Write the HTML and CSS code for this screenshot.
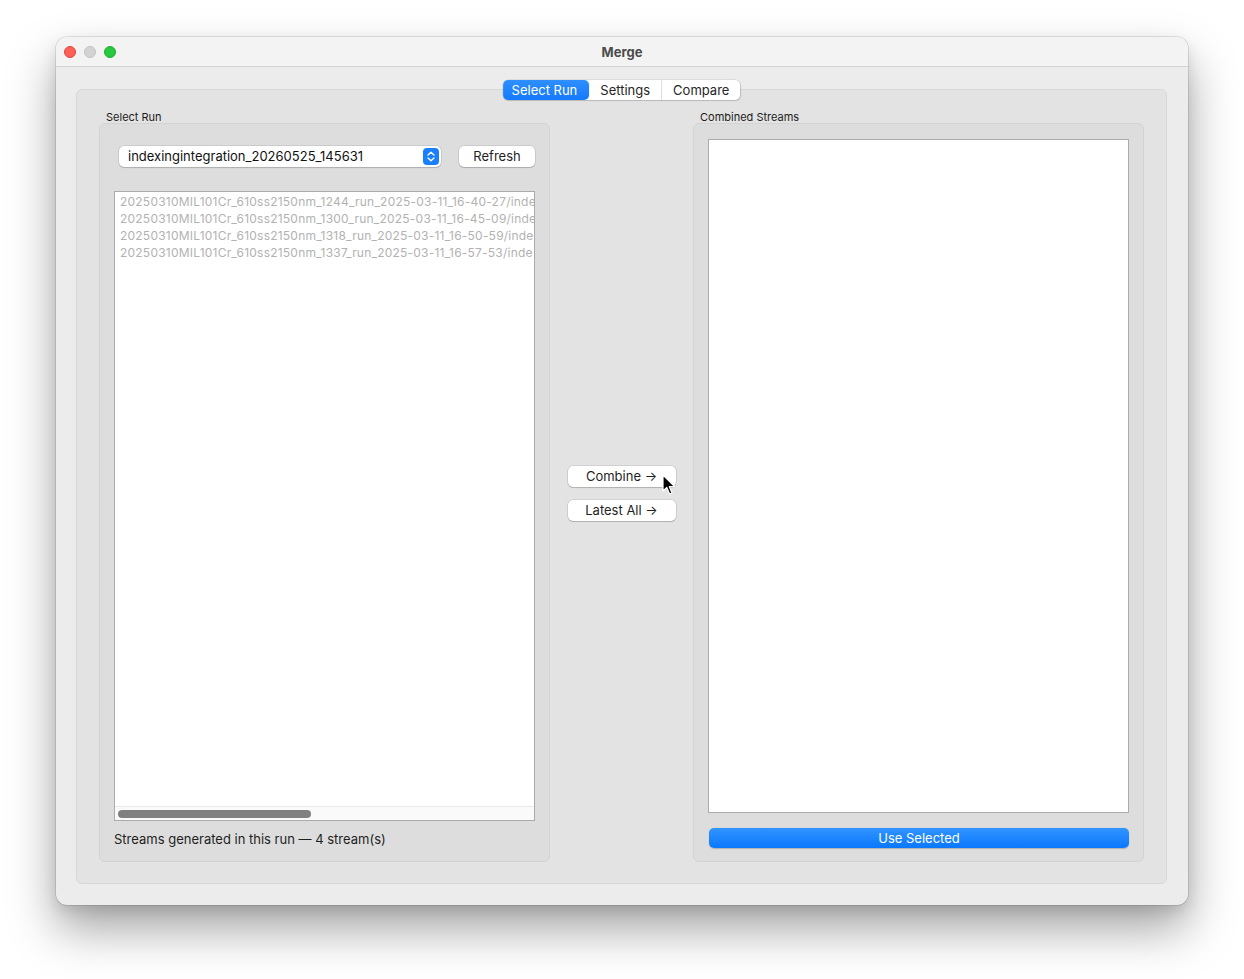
FILE: index.html
```html
<!DOCTYPE html>
<html lang="en">
<head>
  <meta charset="UTF-8" />
  <title>Merge</title>
  <link rel="stylesheet" href="styles.css">
</head>
<body>
  <div class="window">
    <div class="titlebar">
      <div class="lights">
        <span class="light red"></span>
        <span class="light gray"></span>
        <span class="light green"></span>
      </div>
      <div class="title">Merge</div>
    </div>

    <div class="content">
      <div class="tabframe">
        <div class="tabs">
          <span class="tab active">Select Run</span>
          <span class="tab">Settings</span>
          <span class="tab">Compare</span>
        </div>

        <div class="columns">
          <!-- left: run picker -->
          <div class="group">
            <div class="group-title">Select Run</div>
            <div class="group-box run-box">
              <div class="run-row">
                <div class="combo">
                  <span>indexingintegration_20260525_145631</span>
                  <svg class="combo-arrow" width="16" height="17" viewBox="0 0 16 17">
                    <rect width="16" height="17" rx="4" fill="#1a7ffb"/>
                    <path d="M5 7 L8 4.2 L11 7" fill="none" stroke="#fff" stroke-width="1.4" stroke-linecap="round" stroke-linejoin="round"/>
                    <path d="M5 10 L8 12.8 L11 10" fill="none" stroke="#fff" stroke-width="1.4" stroke-linecap="round" stroke-linejoin="round"/>
                  </svg>
                </div>
                <button class="btn refresh">Refresh</button>
              </div>

              <div class="list">
                <div class="list-items">
                  <div class="item">20250310MIL101Cr_610ss2150nm_1244_run_2025-03-11_16-40-27/inde</div>
                  <div class="item">20250310MIL101Cr_610ss2150nm_1300_run_2025-03-11_16-45-09/inde</div>
                  <div class="item">20250310MIL101Cr_610ss2150nm_1318_run_2025-03-11_16-50-59/inde</div>
                  <div class="item">20250310MIL101Cr_610ss2150nm_1337_run_2025-03-11_16-57-53/inde</div>
                </div>
                <div class="hscroll"><div class="thumb"></div></div>
              </div>

              <div class="status">Streams generated in this run — 4 stream(s)</div>
            </div>
          </div>

          <!-- middle: actions -->
          <div class="actions">
            <button class="btn action">Combine →</button>
            <button class="btn action">Latest All →</button>
          </div>

          <!-- right: combined output -->
          <div class="group">
            <div class="group-title">Combined Streams</div>
            <div class="group-box out-box">
              <div class="list out-list"></div>
              <button class="btn primary">Use Selected</button>
            </div>
          </div>
        </div>
      </div>
    </div>
  </div>

  <svg class="cursor" width="14" height="22" viewBox="0 0 14 22">
    <path d="M1 1 L1 17 L4.8 13.4 L7.6 20 L10 19 L7.3 12.6 L12.4 12.4 Z" fill="#000" stroke="#fff" stroke-width="1.2" stroke-linejoin="round"/>
  </svg>
</body>
</html>
```

FILE: styles.css
```css
body {
  margin: 0;
  padding: 37px 56px 0;
  min-height: 100vh;
  box-sizing: border-box;
  background: #ffffff;
  font-family: 'Inter', 'Liberation Sans', sans-serif;
  font-size: 13px;
  color: #1f1f1f;
}

.window {
  width: 1132px;
  height: 868px;
  border-radius: 11px;
  overflow: hidden;
  background: #ececec;
  box-shadow: 0 0 0 0.5px rgba(0, 0, 0, 0.2), 0 24px 48px rgba(0, 0, 0, 0.36), 0 6px 14px rgba(0, 0, 0, 0.1);
  display: flex;
  flex-direction: column;
}

.titlebar {
  height: 29px;
  background: #f2f3f2;
  border-bottom: 1px solid #d2d2d2;
  display: flex;
  align-items: center;
  position: relative;
}

.lights {
  display: flex;
  gap: 8px;
  padding-left: 8px;
  position: absolute;
  left: 0;
  top: 9px;
}

.light {
  width: 12px;
  height: 12px;
  border-radius: 50%;
  box-sizing: border-box;
}

.light.red { background: #fe5f57; border: 0.5px solid #e0443e; }
.light.gray { background: #d3d3d3; border: 0.5px solid #c2c2c2; }
.light.green { background: #28c840; border: 0.5px solid #1dad2b; }

.title {
  flex: 1;
  text-align: center;
  font-weight: 700;
  font-size: 13px;
  color: #4c4c4c;
}

.content {
  flex: 1;
  padding: 22px 21px 21px 20px;
  display: flex;
}

.tabframe {
  flex: 1;
  position: relative;
  background: #e3e3e3;
  border: 1px solid #d7d7d7;
  border-radius: 6px;
  padding: 21px 22px 21px 22px;
  display: flex;
}

.tabs {
  position: absolute;
  top: -10px;
  left: 50%;
  transform: translateX(-50%);
  display: flex;
  height: 20px;
  background: #ffffff;
  border-radius: 5px;
  box-shadow: 0 0 0 0.5px rgba(0, 0, 0, 0.14), 0 1px 1px rgba(0, 0, 0, 0.12);
}

.tab {
  display: flex;
  align-items: center;
  padding: 0 11px;
  font-size: 13px;
  color: #262626;
  border-left: 1px solid #dcdcdc;
}

.tab:first-child { border-left: none; }

.tab.active {
  background: linear-gradient(#2f8fff, #1479fb);
  color: #ffffff;
  border-radius: 5px;
  padding: 0 12px 0 9px;
}

.tab.active + .tab { border-left: none; }

.columns {
  flex: 1;
  display: grid;
  grid-template-columns: 451px 1fr 451px;
}

.group {
  display: flex;
  flex-direction: column;
}

.group-title {
  font-size: 11px;
  line-height: 12px;
  padding-left: 7px;
  color: #1c1c1c;
}

.group-box {
  flex: 1;
  background: #dddddd;
  border: 1px solid #d3d3d3;
  border-radius: 6px;
  display: flex;
  flex-direction: column;
}

.run-box {
  padding: 21px 14px 14px 14px;
}

.run-row {
  display: flex;
  align-items: center;
  gap: 18px;
  padding-left: 5px;
  height: 22px;
}

.combo {
  width: 322px;
  height: 21px;
  box-sizing: border-box;
  background: #ffffff;
  border-radius: 5px;
  box-shadow: 0 0 0 0.5px rgba(0, 0, 0, 0.16), 0 1px 1px rgba(0, 0, 0, 0.14);
  display: flex;
  align-items: center;
  justify-content: space-between;
  padding: 0 2px 0 9px;
  color: #111;
}

.combo-arrow { display: block; }

.btn {
  font-family: inherit;
  font-size: 13px;
  color: #1f1f1f;
  background: #ffffff;
  border: none;
  border-radius: 5px;
  box-shadow: 0 0 0 0.5px rgba(0, 0, 0, 0.16), 0 1px 1px rgba(0, 0, 0, 0.16);
  padding: 0;
  height: 21px;
}

.refresh {
  width: 76px;
}

.list {
  background: #ffffff;
  border: 1px solid #ababab;
  display: flex;
  flex-direction: column;
  overflow: hidden;
}

.run-box .list {
  flex: 1;
  margin-top: 24px;
}

.list-items {
  flex: 1;
  padding: 1px 0 0 5px;
  white-space: nowrap;
  overflow: hidden;
}

.item {
  font-size: 12px;
  line-height: 17px;
  color: #b2b2b2;
  letter-spacing: 0.22px;
}

.hscroll {
  height: 14px;
  background: #fafafa;
  border-top: 1px solid #e8e8e8;
  padding: 3px 0 0 3px;
  box-sizing: border-box;
}

.thumb {
  width: 193px;
  height: 8px;
  border-radius: 4px;
  background: #808080;
}

.status {
  margin-top: 10px;
  line-height: 16px;
  font-size: 13px;
  color: #1f1f1f;
}

.actions {
  display: flex;
  flex-direction: column;
  align-items: center;
  justify-content: center;
  gap: 13px;
  padding-top: 13px;
}

.action {
  width: 108px;
  height: 21px;
}

.out-box {
  padding: 15px 14px 13px 14px;
}

.out-list {
  flex: 1;
}

.primary {
  margin: 15px 0 0 1px;
  width: 420px;
  height: 20px;
  color: #ffffff;
  background: linear-gradient(#3194ff, #0a78fd);
  box-shadow: 0 0.5px 1px rgba(0, 0, 0, 0.2);
}

.cursor {
  position: absolute;
  left: 662px;
  top: 474px;
}
```
